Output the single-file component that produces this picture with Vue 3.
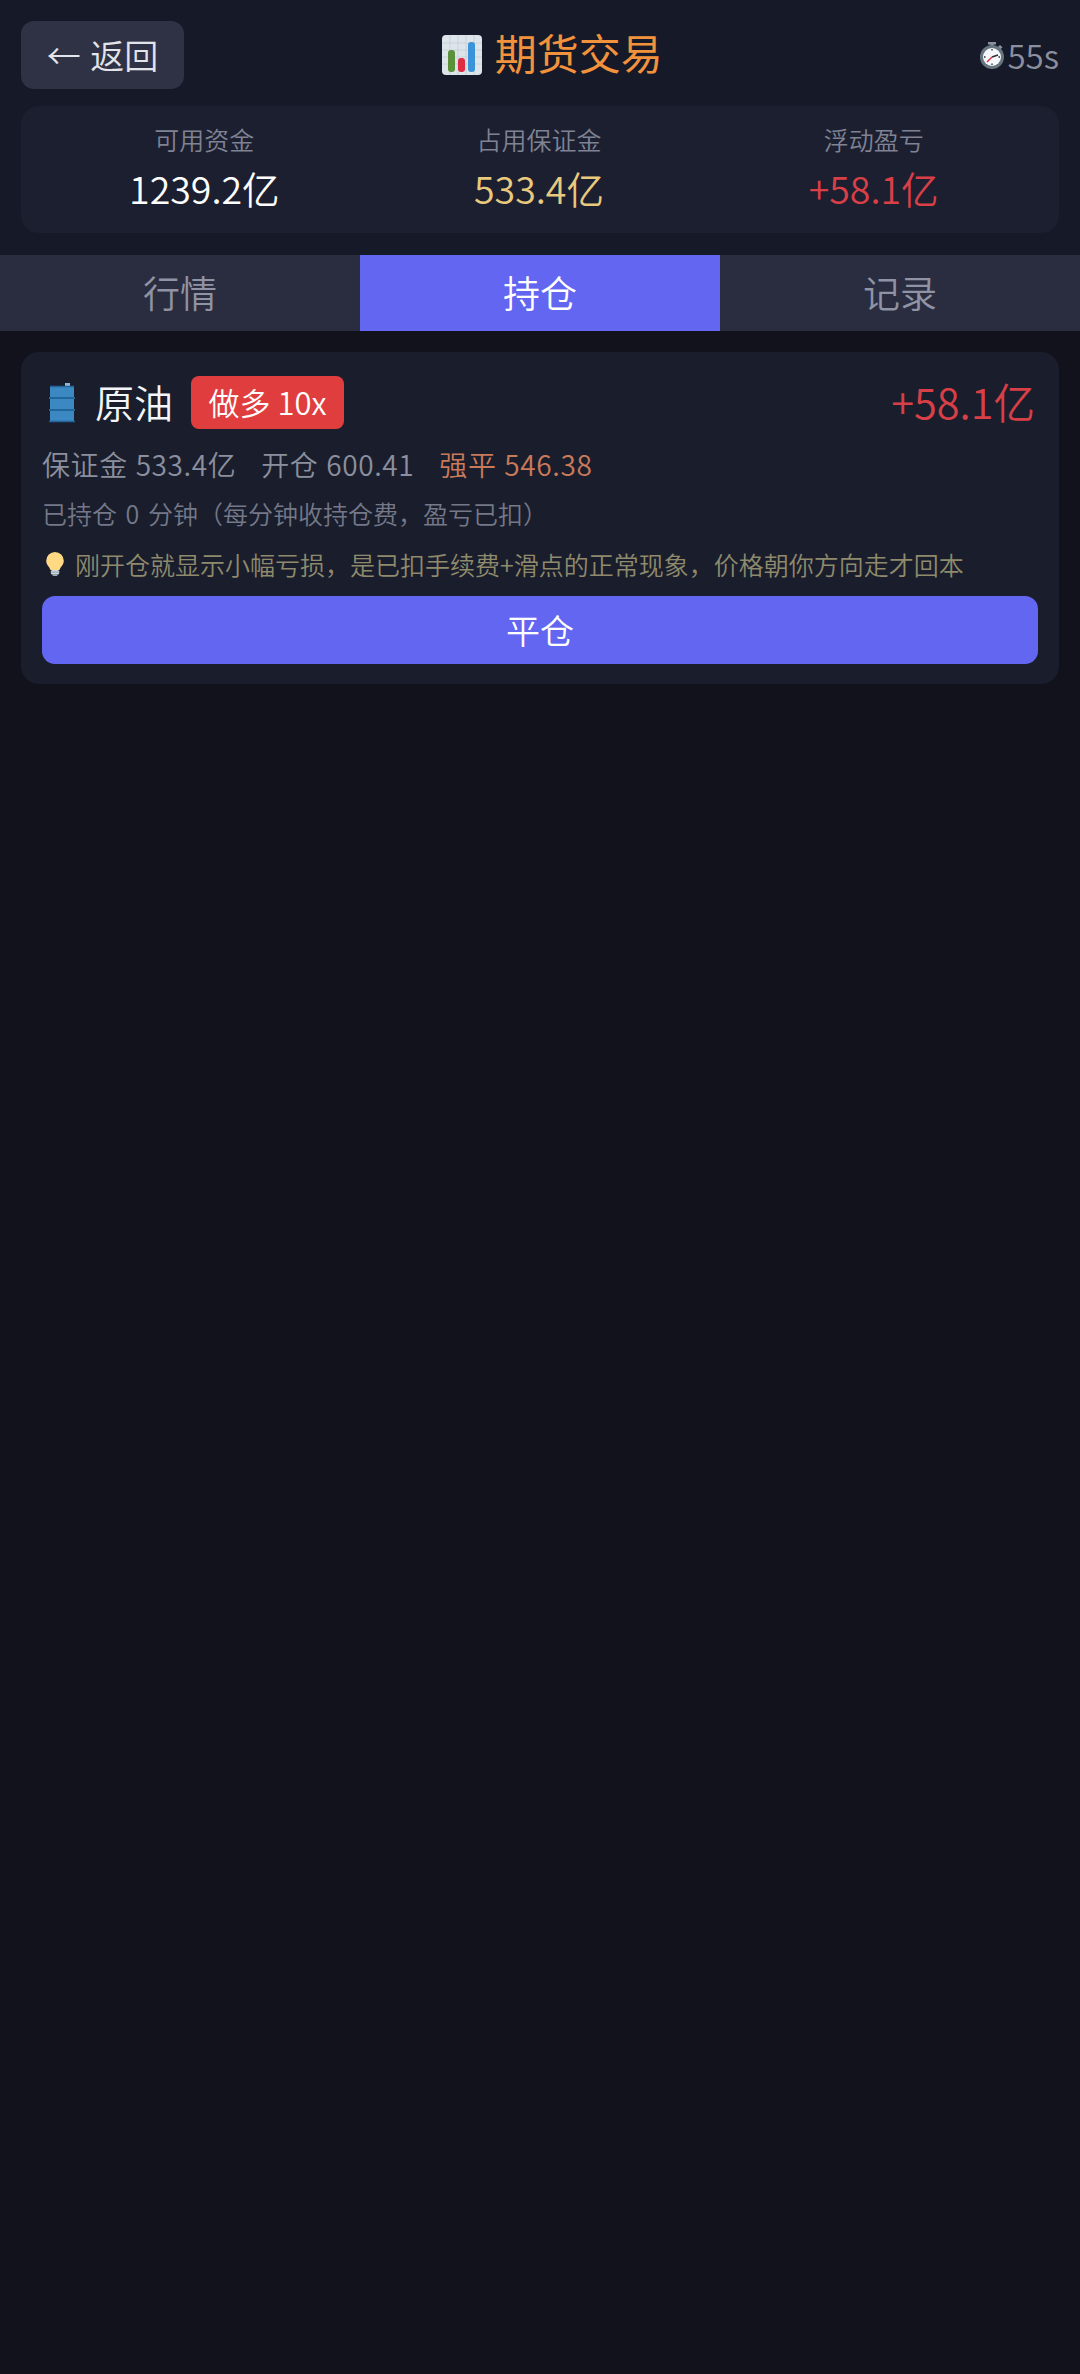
<script setup>
const stats = [
  { label: '可用资金', value: '1239.2亿', tone: 'white' },
  { label: '占用保证金', value: '533.4亿', tone: 'gold' },
  { label: '浮动盈亏', value: '+58.1亿', tone: 'red' }
]
const tabs = [
  { label: '行情', active: false },
  { label: '持仓', active: true },
  { label: '记录', active: false }
]
</script>

<template>
  <div class="page">
    <header class="top">
      <div class="bar">
        <button class="back"><span class="arrow">←</span> 返回</button>
        <h1 class="title">
          <svg class="chart" viewBox="0 0 40 40">
            <rect width="40" height="40" rx="4" fill="#dde5ea" />
            <path d="M0 8h40M0 15h40M0 22h40M0 29h40M8 0v40M16 0v40M24 0v40M32 0v40" stroke="#c8d2d9" stroke-width="1" />
            <rect x="6" y="15" width="7" height="22" rx="3" fill="#5c913b" />
            <rect x="16" y="23" width="7" height="14" rx="3" fill="#dd2e44" />
            <rect x="26" y="7" width="7" height="30" rx="3" fill="#3b94d9" />
          </svg>
          <span class="title-text">期货交易</span>
        </h1>
        <div class="timer">
          <svg class="watch" viewBox="0 0 24 27">
            <rect x="8" y="0" width="8" height="2.500" fill="#8a9198" />
            <rect x="10.500" y="2" width="3" height="3" fill="#8a9198" />
            <rect x="18.500" y="3.500" width="3.500" height="3.500" transform="rotate(45 20 5)" fill="#8a9198" />
            <circle cx="12" cy="15" r="12" fill="#66757f" />
            <circle cx="12" cy="15" r="9" fill="#f5f8fa" />
            <path d="M12 15l6-2" stroke="#292f33" stroke-width="1.500" />
            <path d="M12 15l-5 5" stroke="#dd2e44" stroke-width="1.500" />
            <path d="M12 7v1.500M12 21.500V23M4 15h1.500M18.500 15H20" stroke="#292f33" stroke-width="1.300" />
          </svg>
          <span>55s</span>
        </div>
      </div>
      <section class="stats">
        <div v-for="s in stats" :key="s.label" class="stat">
          <div class="stat-label">{{ s.label }}</div>
          <div class="stat-value" :class="s.tone">{{ s.value }}</div>
        </div>
      </section>
    </header>

    <nav class="tabs">
      <div v-for="t in tabs" :key="t.label" class="tab" :class="{ active: t.active }">{{ t.label }}</div>
    </nav>

    <main class="list">
      <article class="card">
        <div class="row-head">
          <div class="name-wrap">
            <svg class="drum" viewBox="0 0 28 40">
              <rect x="17" y="0" width="5" height="3" fill="#8fb8d8" />
              <rect x="2" y="3" width="24" height="36" fill="#3b88c3" />
              <path d="M1 15h26M1 27h26" stroke="#226699" stroke-width="2" />
              <path d="M2 3.500h24M1 38.500h26" stroke="#226699" stroke-width="1.500" />
            </svg>
            <span class="name">原油</span>
            <span class="badge">做多 10x</span>
          </div>
          <div class="pnl">+58.1亿</div>
        </div>
        <div class="meta">
          <span>保证金 533.4亿</span>
          <span>开仓 600.41</span>
          <span class="liq">强平 546.38</span>
        </div>
        <div class="held">已持仓 0 分钟（每分钟收持仓费，盈亏已扣）</div>
        <div class="hint">
          <svg class="bulb" viewBox="0 0 18 24">
            <path d="M9 0a8.800 8.800 0 0 0-8.800 8.800c0 4.400 3.400 6 4.200 9.200h9.200c.8-3.200 4.200-4.800 4.200-9.200A8.800 8.800 0 0 0 9 0z" fill="#ffd983" />
            <rect x="4.800" y="18" width="8.400" height="4.500" rx="1.500" fill="#ccd6dd" />
            <path d="M4.800 20.200h8.400" stroke="#99aab5" stroke-width="1.200" />
            <rect x="6.500" y="22.300" width="5" height="1.700" rx=".8" fill="#99aab5" />
          </svg>
          <span>刚开仓就显示小幅亏损，是已扣手续费+滑点的正常现象，价格朝你方向走才回本</span>
        </div>
        <button class="close">平仓</button>
      </article>
    </main>
  </div>
</template>

<style>
html, body { margin: 0; background: #11121b; }
</style>

<style scoped>
.page {
  min-height: 2374px;
  background: #11121b;
  font-family: "Noto Sans CJK SC", "Noto Sans", sans-serif;
  font-weight: 350;
  color: #fff;
}
.top {
  background: #161927;
  padding: 21px 21px 22px;
}
.bar {
  display: flex;
  align-items: center;
  justify-content: space-between;
  height: 68px;
}
.back {
  width: 163px;
  height: 68px;
  box-sizing: border-box;
  border: 0;
  border-radius: 13px;
  background: #2f3245;
  color: #e2e4ea;
  font: inherit;
  font-size: 34px;
  line-height: 1;
  padding: 0;
  word-spacing: 2px;
}
.arrow { font-size: 34px; }
.title {
  display: flex;
  align-items: center;
  gap: 13px;
  margin: 0 60px 0 0;
  font-size: 42px;
  font-weight: 400;
  line-height: 1;
  color: #f2923d;
}
.title-text { padding-bottom: 6px; }
.chart { width: 40px; height: 40px; }
.timer {
  display: flex;
  align-items: center;
  color: #8b8f9e;
  font-size: 33px;
  line-height: 1;
}
.watch { width: 24px; height: 27px; margin-right: 3px; }
.stats {
  display: grid;
  grid-template-columns: repeat(3, 1fr);
  align-items: center;
  box-sizing: border-box;
  margin-top: 17px;
  height: 127px;
  padding: 0 18px 6px 16px;
  border-radius: 18px;
  background: #1c1f30;
}
.stat { text-align: center; }
.stat-label {
  font-size: 25px;
  line-height: 36px;
  margin-bottom: 6px;
  color: #7f8394;
}
.stat-value {
  font-size: 37.500px;
  line-height: 50px;
}
.white { color: #fff; }
.gold { color: #e8c97e; }
.red { color: #d93f46; }
.tabs {
  display: flex;
  height: 76px;
}
.tab {
  flex: 1;
  display: flex;
  align-items: center;
  justify-content: center;
  background: #2a2d40;
  color: #8f93a3;
  font-size: 37px;
  padding-bottom: 2px;
}
.tab.active {
  background: #6366f1;
  color: #fff;
}
.list { padding: 21px; }
.card {
  box-sizing: border-box;
  height: 332px;
  padding: 24px 21px 20px;
  border-radius: 18px;
  background: #1a1e2c;
}
.row-head {
  display: flex;
  align-items: center;
  justify-content: space-between;
  height: 53px;
}
.name-wrap {
  display: flex;
  align-items: center;
}
.drum { width: 28px; height: 40px; margin-left: 6px; }
.name {
  margin-left: 19px;
  padding-bottom: 2px;
  font-size: 39px;
  line-height: 1;
  color: #f4f5f8;
}
.badge {
  display: flex;
  align-items: center;
  justify-content: center;
  box-sizing: border-box;
  width: 153px;
  height: 53px;
  margin-left: 18px;
  padding-bottom: 3px;
  border-radius: 8px;
  background: #e03e3e;
  font-size: 31px;
  line-height: 1;
}
.pnl {
  margin-right: 3px;
  padding-bottom: 2px;
  font-size: 41.500px;
  line-height: 1;
  color: #d93f46;
}
.meta {
  display: flex;
  gap: 25px;
  margin-top: 15px;
  font-size: 28px;
  line-height: 40px;
  letter-spacing: .6px;
  word-spacing: 1px;
  color: #8b8f9e;
}
.liq { color: #c97a5a; }
.held {
  margin-top: 8.500px;
  font-size: 25px;
  line-height: 40px;
  word-spacing: 3px;
  color: #747888;
}
.hint {
  display: flex;
  align-items: center;
  gap: 11px;
  margin-top: 11px;
  font-size: 25px;
  line-height: 40px;
  color: #8f8a6c;
}
.bulb { width: 18px; height: 24px; margin-left: 4px; }
.close {
  display: block;
  width: 100%;
  height: 68px;
  margin-top: 12.500px;
  border: 0;
  border-radius: 13px;
  background: #6366f1;
  color: #fff;
  font: inherit;
  font-size: 34px;
  line-height: 1;
}
</style>
